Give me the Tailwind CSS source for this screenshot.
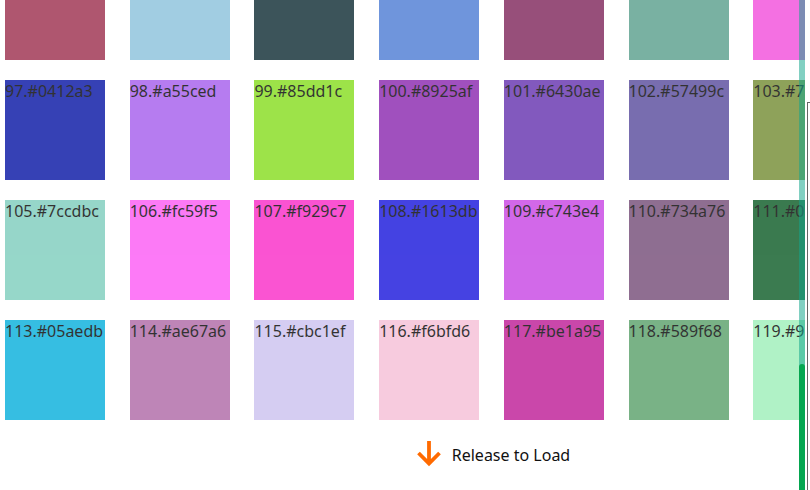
<!DOCTYPE html>
<html lang="en">
<head>
<meta charset="utf-8">
<title>Color list</title>
<script src="https://cdn.jsdelivr.net/npm/@tailwindcss/browser@4"></script>
</head>
<body class="bg-white h-screen overflow-hidden flex font-['Noto_Sans','Open_Sans',sans-serif] text-base leading-[22px] text-black">
<main class="relative flex-1 min-w-0 overflow-hidden">
  <ul class="grid grid-cols-7 gap-y-5 w-[873px] ml-[5px]">
    <li class="size-25 h-15 opacity-80 bg-[#9b2c4b]"></li>
    <li class="size-25 h-15 opacity-80 bg-[#8ac0db]"></li>
    <li class="size-25 h-15 opacity-80 bg-[#0b2931]"></li>
    <li class="size-25 h-15 opacity-80 bg-[#4b7ad3]"></li>
    <li class="size-25 h-15 opacity-80 bg-[#7d2359]"></li>
    <li class="size-25 h-15 opacity-80 bg-[#579d8b]"></li>
    <li class="size-25 h-15 opacity-80 bg-[#f14cdb]"></li>

    <li class="size-25 opacity-80 bg-[#0412a3]">97.#0412a3</li>
    <li class="size-25 opacity-80 bg-[#a55ced]">98.#a55ced</li>
    <li class="size-25 opacity-80 bg-[#85dd1c]">99.#85dd1c</li>
    <li class="size-25 opacity-80 bg-[#8925af]">100.#8925af</li>
    <li class="size-25 opacity-80 bg-[#6430ae]">101.#6430ae</li>
    <li class="size-25 opacity-80 bg-[#57499c]">102.#57499c</li>
    <li class="size-25 opacity-80 bg-[#738b31]">103.#738b31</li>

    <li class="size-25 opacity-80 bg-[#7ccdbc]">105.#7ccdbc</li>
    <li class="size-25 opacity-80 bg-[#fc59f5]">106.#fc59f5</li>
    <li class="size-25 opacity-80 bg-[#f929c7]">107.#f929c7</li>
    <li class="size-25 opacity-80 bg-[#1613db]">108.#1613db</li>
    <li class="size-25 opacity-80 bg-[#c743e4]">109.#c743e4</li>
    <li class="size-25 opacity-80 bg-[#734a76]">110.#734a76</li>
    <li class="size-25 opacity-80 bg-[#0a5a24]">111.#0a5a24</li>

    <li class="size-25 opacity-80 bg-[#05aedb]">113.#05aedb</li>
    <li class="size-25 opacity-80 bg-[#ae67a6]">114.#ae67a6</li>
    <li class="size-25 opacity-80 bg-[#cbc1ef]">115.#cbc1ef</li>
    <li class="size-25 opacity-80 bg-[#f6bfd6]">116.#f6bfd6</li>
    <li class="size-25 opacity-80 bg-[#be1a95]">117.#be1a95</li>
    <li class="size-25 opacity-80 bg-[#589f68]">118.#589f68</li>
    <li class="size-25 opacity-80 bg-[#9df0b9]">119.#9df0b9</li>
  </ul>
  <div class="w-[986px] h-[70px] flex items-center justify-center gap-[10px] text-[#111]">
    <svg class="w-[26px] h-[28px]" viewBox="0 0 26 28" fill="none" stroke="#ff6a00" stroke-width="3.8" aria-hidden="true"><path d="M13 0V22.500M2.500 12L13 22.500L23.500 12"/></svg>
    <p>Release to Load</p>
  </div>
  <div class="absolute inset-y-0 right-0 w-1.5 bg-[#11a68c]/53">
    <div class="absolute top-[364px] bottom-0 w-full rounded-t-[3px] bg-[#05a650]"></div>
  </div>
</main>
<aside class="w-[5px] pl-[2px] pt-[102px] flex">
  <div class="flex-1 border-l border-t border-[#666]"></div>
</aside>
</body>
</html>
